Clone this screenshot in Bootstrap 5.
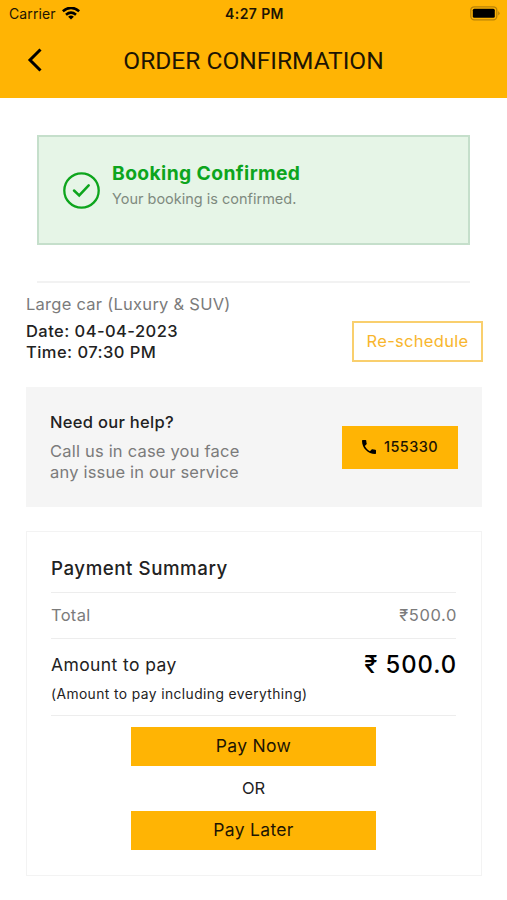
<!DOCTYPE html>
<html lang="en">
<head>
<meta charset="utf-8">
<meta name="viewport" content="width=device-width, initial-scale=1">
<title>Order Confirmation</title>
<link href="https://cdn.jsdelivr.net/npm/bootstrap@5.3.0/dist/css/bootstrap.min.css" rel="stylesheet">
<style>
  body { font-family: Inter, "Liberation Sans", sans-serif; font-size: 16.5px; line-height: 21px; color: #222; letter-spacing: .3px; background: #fff; height: 900px; overflow: hidden; }
  .fw-medium { font-weight: 500 !important; }
  .amber { background: #ffb404; }
  .app-header { height: 98px; color: #1d1503; }
  .status-bar { height: 27px; font-size: 14px; letter-spacing: .1px; padding: 0 7px 0 9px; }
  .status-bar > * { flex: 1 1 0; }
  .wifi { margin-left: 6px; }
  .time-text { letter-spacing: .4px; }
  .title-bar { height: 66px; padding-left: 27px; }
  .title-bar h1 { font: 400 24.5px/30px Roboto, sans-serif; letter-spacing: 0; padding: 2px 43px 0 0; }
  .muted { color: #7b7b7b; }
  .confirm-box { margin: 37px 37px 0; height: 110px; background: #e6f5e7; border: 2px solid #c5dfcb; padding: 0 24px; }
  .confirm-title { font-size: 19.3px; line-height: 24px; font-weight: 700; color: #0da51d; letter-spacing: .38px; }
  .confirm-note { font-size: 14.5px; line-height: 20px; letter-spacing: 0; color: #7e8a7f; margin-top: 4px; }
  .confirm-text { padding-bottom: 11px; }
  .divider { width: 433px; height: 2px; margin-top: 36px; background: #f2f2f2; }
  .sheet { padding: 0 25px 0 26px; }
  .btn { --bs-btn-border-radius: 0; --bs-btn-padding-y: 0; --bs-btn-padding-x: 0; --bs-btn-color: #1d1503; --bs-btn-border-width: 0; letter-spacing: inherit; }
  .booking { height: 79px; }
  .car-type { margin-bottom: 6px; letter-spacing: .26px; }
  .when { letter-spacing: .45px; margin-bottom: -1px; }
  .btn-outline-amber { width: 131px; height: 41px; margin-right: -1px; border: 2px solid #f9cf6d; color: #f8b62d; font-size: 16.5px; }
  .help-box { background: #f5f5f5; height: 120px; margin-top: 25px; padding: 0 24px; }
  .help-title { margin-bottom: 8px; }
  .help-copy { letter-spacing: .2px; }
  .btn-call { width: 116px; height: 43px; font-size: 14.5px; font-weight: 500; letter-spacing: .4px; }
  .summary { margin-top: 24px; height: 345px; border: 1px solid #f3f3f3; padding: 25px 25px 0 24px; }
  .rule { border-bottom: 1px solid #ededed; }
  .summary h2 { font-size: 18.7px; line-height: 24px; letter-spacing: .55px; height: 36px; }
  .total-row { height: 46px; }
  .total-value { letter-spacing: .6px; margin-right: -1px; }
  .due-row { height: 77px; padding-top: 13px; }
  .due-label { font-size: 17.5px; line-height: 26px; letter-spacing: .4px; }
  .due-note { font-size: 13.8px; line-height: 20px; letter-spacing: .42px; margin-top: 6px; }
  .due-value { font-size: 23.8px; line-height: 26px; letter-spacing: .95px; margin-right: -1px; color: #000; }
  .pay-actions { padding-top: 11px; }
  .btn-pay { width: 245px; height: 39px; font-size: 17.5px; }
  .or-text { line-height: 45px; letter-spacing: 0; }
</style>
</head>
<body>
<header class="app-header amber">
  <div class="status-bar d-flex align-items-center">
    <div class="d-flex align-items-center"><span>Carrier</span>
      <svg class="wifi" width="18" height="14" viewBox="1 1.500 18 14" fill="none" stroke="#000" stroke-width="2.700"><path d="M1.800 5.800Q10-1 18.200 5.800M5 9.200q5-4 10 0"/><path d="M10 14 7.100 11.200q2.900-2.300 5.800 0z" fill="#000" stroke="none"/></svg>
    </div>
    <div class="text-center fw-semibold time-text">4:27 PM</div>
    <div class="d-flex justify-content-end">
      <svg width="30" height="15" viewBox="0 0 30 15"><rect x=".8" y=".8" width="26" height="13" rx="3.500" fill="none" stroke="#b98309" stroke-width="1.300"/><rect x="2.800" y="2.800" width="22" height="9" rx="1.500"/><path d="M28.200 5q2.800 2.300 0 4.600z" fill="#b98309"/></svg>
    </div>
  </div>
  <div class="title-bar d-flex align-items-center">
    <svg width="16" height="26" viewBox="0 0 16 26" fill="none" stroke="#000" stroke-width="3"><path d="M13.500 2.500 3 13l10.500 10.500"/></svg>
    <h1 class="m-0 flex-grow-1 text-center">ORDER CONFIRMATION</h1>
  </div>
</header>

<main>
  <section class="confirm-box d-flex align-items-center">
    <svg width="37" height="37" viewBox="0 0 37 37" fill="none" stroke="#0da51d"><circle cx="18.500" cy="18.500" r="17.200" stroke-width="2.300"/><path d="m11 18.500 5.200 4.900 9.500-10" stroke-width="2.500" stroke-linecap="round"/></svg>
    <div class="ms-2 ps-1 confirm-text">
      <div class="confirm-title">Booking Confirmed</div>
      <div class="confirm-note">Your booking is confirmed.</div>
    </div>
  </section>

  <div class="divider mx-auto"></div>

  <div class="sheet">
    <section class="booking d-flex justify-content-between align-items-end">
      <div>
        <div class="muted car-type">Large car (Luxury &amp; SUV)</div>
        <div class="fw-medium when">Date: 04-04-2023<br>Time: 07:30 PM</div>
      </div>
      <button class="btn btn-outline-amber" type="button">Re-schedule</button>
    </section>

    <section class="help-box d-flex justify-content-between align-items-center">
      <div>
        <div class="fw-medium help-title">Need our help?</div>
        <div class="muted help-copy">Call us in case you face<br>any issue in our service</div>
      </div>
      <button class="btn btn-call amber d-flex align-items-center justify-content-center" type="button">
        <svg class="me-2" width="14" height="14" viewBox="3 3 18 18"><path d="M6.620 10.790c1.440 2.830 3.760 5.140 6.590 6.590l2.200-2.200c.27-.27.67-.36 1.020-.24 1.120.37 2.330.57 3.570.57.55 0 1 .45 1 1V20c0 .55-.45 1-1 1C10.610 21 3 13.390 3 4c0-.55.45-1 1-1h3.500c.55 0 1 .45 1 1 0 1.250.2 2.450.57 3.570.11.35.03.74-.25 1.020z"/></svg>155330
      </button>
    </section>

    <section class="summary">
      <h2 class="m-0 rule fw-medium">Payment Summary</h2>
      <div class="total-row rule d-flex justify-content-between align-items-center muted"><span>Total</span><span class="total-value">₹500.0</span></div>
      <div class="due-row rule d-flex justify-content-between align-items-start">
        <div>
          <div class="due-label">Amount to pay</div>
          <div class="due-note">(Amount to pay including everything)</div>
        </div>
        <div class="due-value fw-medium">₹ 500.0</div>
      </div>
      <div class="pay-actions d-flex flex-column align-items-center">
        <button class="btn btn-pay amber" type="button">Pay Now</button>
        <div class="or-text">OR</div>
        <button class="btn btn-pay amber" type="button">Pay Later</button>
      </div>
    </section>
  </div>
</main>
<script src="https://cdn.jsdelivr.net/npm/bootstrap@5.3.0/dist/js/bootstrap.bundle.min.js"></script>
</body>
</html>
